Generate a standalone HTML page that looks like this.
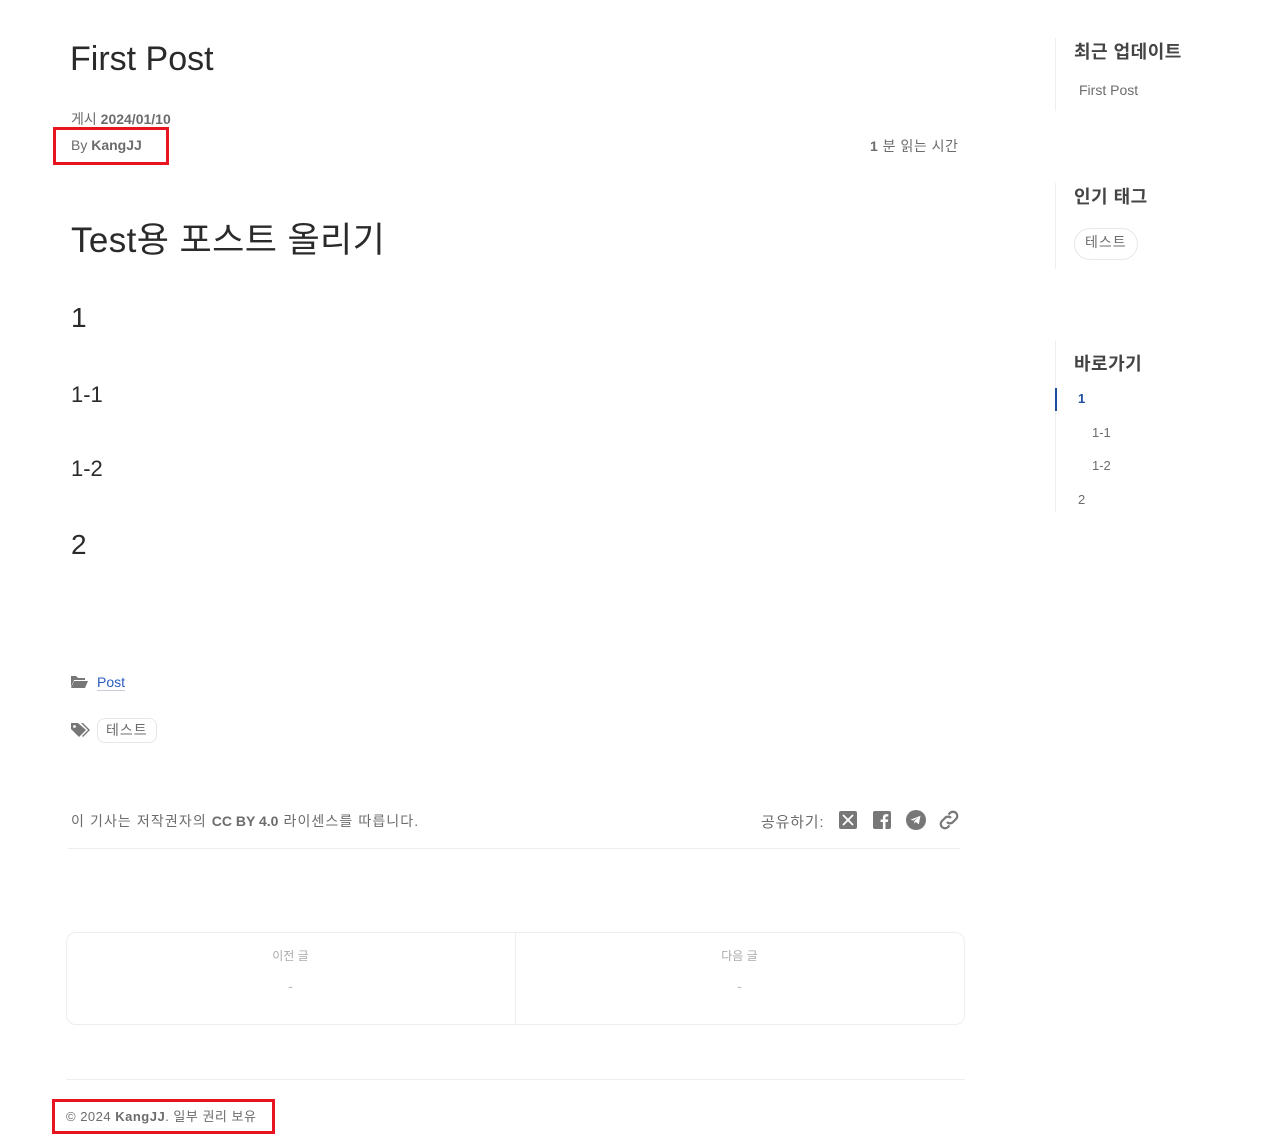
<!DOCTYPE html>
<html><head><meta charset="utf-8">
<style>
*{margin:0;padding:0;box-sizing:border-box}
body{width:1282px;height:1137px;background:#fff;position:relative;overflow:hidden;font-family:"Liberation Sans","Noto Sans CJK KR",sans-serif;color:#6c6c6c}
.a{position:absolute;white-space:nowrap}
.red{position:absolute;border:3px solid #e8141f}
.side{position:absolute;left:1055px;border-left:1px solid #eee}
</style></head><body>
<div class="a" style="left:70px;top:40px;font-size:34px;color:#2a2a2a">First Post</div>
<div class="a" style="left:71px;top:109px;font-size:14px">게시 <b style="font-weight:600">2024/01/10</b></div>
<div class="a" style="left:71px;top:137px;font-size:14px">By <b style="font-weight:600">KangJJ</b></div>
<div class="red" style="left:53px;top:127px;width:116px;height:38px"></div>
<div class="a" style="left:870px;top:136px;font-size:14px;letter-spacing:0.5px"><b style="font-weight:600">1</b> 분 읽는 시간</div>

<div class="a" style="left:71px;top:212px;font-size:35px;color:#2a2a2a;letter-spacing:0.4px">Test용 포스트 올리기</div>
<div class="a" style="left:71px;top:302px;font-size:28px;color:#2a2a2a">1</div>
<div class="a" style="left:71px;top:382px;font-size:22px;color:#2a2a2a">1-1</div>
<div class="a" style="left:71px;top:456px;font-size:22px;color:#2a2a2a">1-2</div>
<div class="a" style="left:71px;top:529px;font-size:28px;color:#2a2a2a">2</div>

<svg class="a" style="left:70px;top:674px" width="19" height="15" viewBox="0 0 19 15"><path d="M1 2h5l2 2h7v2H4L1 13z" fill="#777"/><path d="M4 7h14l-3 7H1z" fill="#777"/></svg>
<div class="a" style="left:97px;top:674px;font-size:14px;color:#2a5cc0;border-bottom:1px solid #ccd">Post</div>
<svg class="a" style="left:70px;top:722px" width="20" height="16" viewBox="0 0 20 16"><path d="M1 1h7l8 7-7 7-8-8z" fill="#777"/><circle cx="4.5" cy="4.5" r="1.4" fill="#fff"/><path d="M11 1h2l7 7-7 7-1-1 6-6z" fill="#777"/></svg>
<div class="a" style="left:97px;top:718px;height:25px;padding:0 8px;border:1px solid #e6e6e6;border-radius:8px;font-size:14px;line-height:23px;letter-spacing:1px">테스트</div>

<div class="a" style="left:71px;top:811px;font-size:14px;letter-spacing:1.1px">이 기사는 저작권자의 <b style="font-weight:600;letter-spacing:0">CC BY 4.0</b> 라이센스를 따릅니다.</div>
<div class="a" style="left:761px;top:811px;font-size:15px;letter-spacing:0.8px">공유하기:</div>
<svg class="a" style="left:839px;top:811px" width="18" height="18"><rect width="18" height="18" rx="2" fill="#777"/><path d="M4 4l10 10M14 4L4 14" stroke="#fff" stroke-width="1.8"/></svg>
<svg class="a" style="left:873px;top:811px" width="18" height="18"><rect width="18" height="18" rx="2" fill="#777"/><path d="M12.5 18v-7h2.3l.4-2.6h-2.7V6.8c0-.8.3-1.300 1.4-1.3h1.4V3.2a16 16 0 0 0-2-.1c-2 0-3.4 1.2-3.4 3.5v1.9H7.6V11h2.3v7z" fill="#fff"/></svg>
<svg class="a" style="left:906px;top:810px" width="20" height="20"><circle cx="10" cy="10" r="10" fill="#777"/><path d="M4.5 9.8l10-4-1.7 8.5-3-2.3-1.5 1.5V11l4-3.5-5 3z" fill="#fff"/></svg>
<svg class="a" style="left:938px;top:810px" width="22" height="20" viewBox="0 0 22 20"><g fill="none" stroke="#777" stroke-width="2.2"><path d="M9 12a4 4 0 0 0 6 0l3-3a4 4 0 0 0-6-6l-1.5 1.5"/><path d="M13 8a4 4 0 0 0-6 0l-3 3a4 4 0 0 0 6 6l1.5-1.5"/></g></svg>
<div class="a" style="left:68px;top:848px;width:892px;border-top:1px solid #eee"></div>

<div class="a" style="left:66px;top:932px;width:899px;height:93px;border:1px solid #eee;border-radius:10px"></div>
<div class="a" style="left:515px;top:933px;height:91px;border-left:1px solid #eee"></div>
<div class="a" style="left:66px;top:947px;width:449px;text-align:center;font-size:12px;color:#aaa">이전 글</div>
<div class="a" style="left:66px;top:978px;width:449px;text-align:center;font-size:14px;color:#bbb">-</div>
<div class="a" style="left:515px;top:947px;width:449px;text-align:center;font-size:12px;color:#aaa">다음 글</div>
<div class="a" style="left:515px;top:978px;width:449px;text-align:center;font-size:14px;color:#bbb">-</div>

<div class="a" style="left:66px;top:1079px;width:899px;border-top:1px solid #eee"></div>
<div class="a" style="left:66px;top:1106px;font-size:13px;letter-spacing:0.5px">© 2024 <b style="font-weight:600">KangJJ</b>. 일부 권리 보유</div>
<div class="red" style="left:52px;top:1099px;width:223px;height:35px"></div>

<div class="side" style="top:38px;height:73px"></div>
<div class="a" style="left:1074px;top:38px;font-size:18px;font-weight:bold;color:#444;letter-spacing:0.5px">최근 업데이트</div>
<div class="a" style="left:1079px;top:82px;font-size:14px">First Post</div>
<div class="side" style="top:183px;height:86px"></div>
<div class="a" style="left:1074px;top:183px;font-size:18px;font-weight:bold;color:#444;letter-spacing:0.5px">인기 태그</div>
<div class="a" style="left:1074px;top:228px;height:32px;padding:0 10px;border:1px solid #e8e8e8;border-radius:16px;font-size:14px;line-height:26px;letter-spacing:1px">테스트</div>
<div class="side" style="top:341px;height:171px"></div>
<div class="a" style="left:1074px;top:350px;font-size:18px;font-weight:bold;color:#444;letter-spacing:0.5px">바로가기</div>
<div class="a" style="left:1055px;top:388px;height:23px;border-left:2px solid #1f4ea0"></div>
<div class="a" style="left:1078px;top:391px;font-size:13px;color:#1f4ea0;font-weight:600">1</div>
<div class="a" style="left:1092px;top:425px;font-size:13px">1-1</div>
<div class="a" style="left:1092px;top:458px;font-size:13px">1-2</div>
<div class="a" style="left:1078px;top:492px;font-size:13px">2</div>
</body></html>
